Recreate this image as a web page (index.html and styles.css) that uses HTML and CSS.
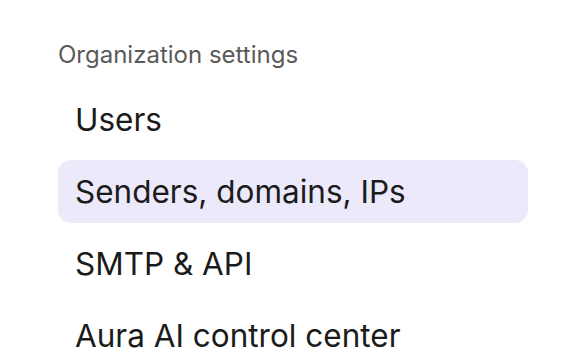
FILE: index.html
```html
<!DOCTYPE html>
<html lang="en">
<head>
<meta charset="utf-8">
<link rel="stylesheet" href="styles.css">
</head>
<body>
<nav class="settings-nav">
  <div class="section-title">Organization settings</div>
  <ul class="nav-list">
    <li class="nav-item">Users</li>
    <li class="nav-item active">Senders, domains, IPs</li>
    <li class="nav-item">SMTP &amp; API</li>
    <li class="nav-item">Aura AI control center</li>
  </ul>
</nav>
</body>
</html>
```
FILE: styles.css
```css
html, body {
  margin: 0;
  padding: 0;
  background: #ffffff;
}
body {
  font-family: Inter, "Noto Sans", sans-serif;
  -webkit-font-smoothing: antialiased;
}
.settings-nav {
  width: 470px;
  padding: 40px 0 0 58px;
}
.section-title {
  font-size: 24px;
  line-height: 30px;
  color: #5a5a5a;
  margin-bottom: 18px;
}
.nav-list {
  list-style: none;
  margin: 0;
  padding: 0;
  display: flex;
  flex-direction: column;
  gap: 9px;
}
.nav-item {
  height: 63px;
  display: flex;
  align-items: center;
  padding: 0 17px;
  font-size: 31.5px;
  color: #1b1b1b;
  border-radius: 13px;
}
.nav-item.active {
  background: #ece9fb;
}
```
